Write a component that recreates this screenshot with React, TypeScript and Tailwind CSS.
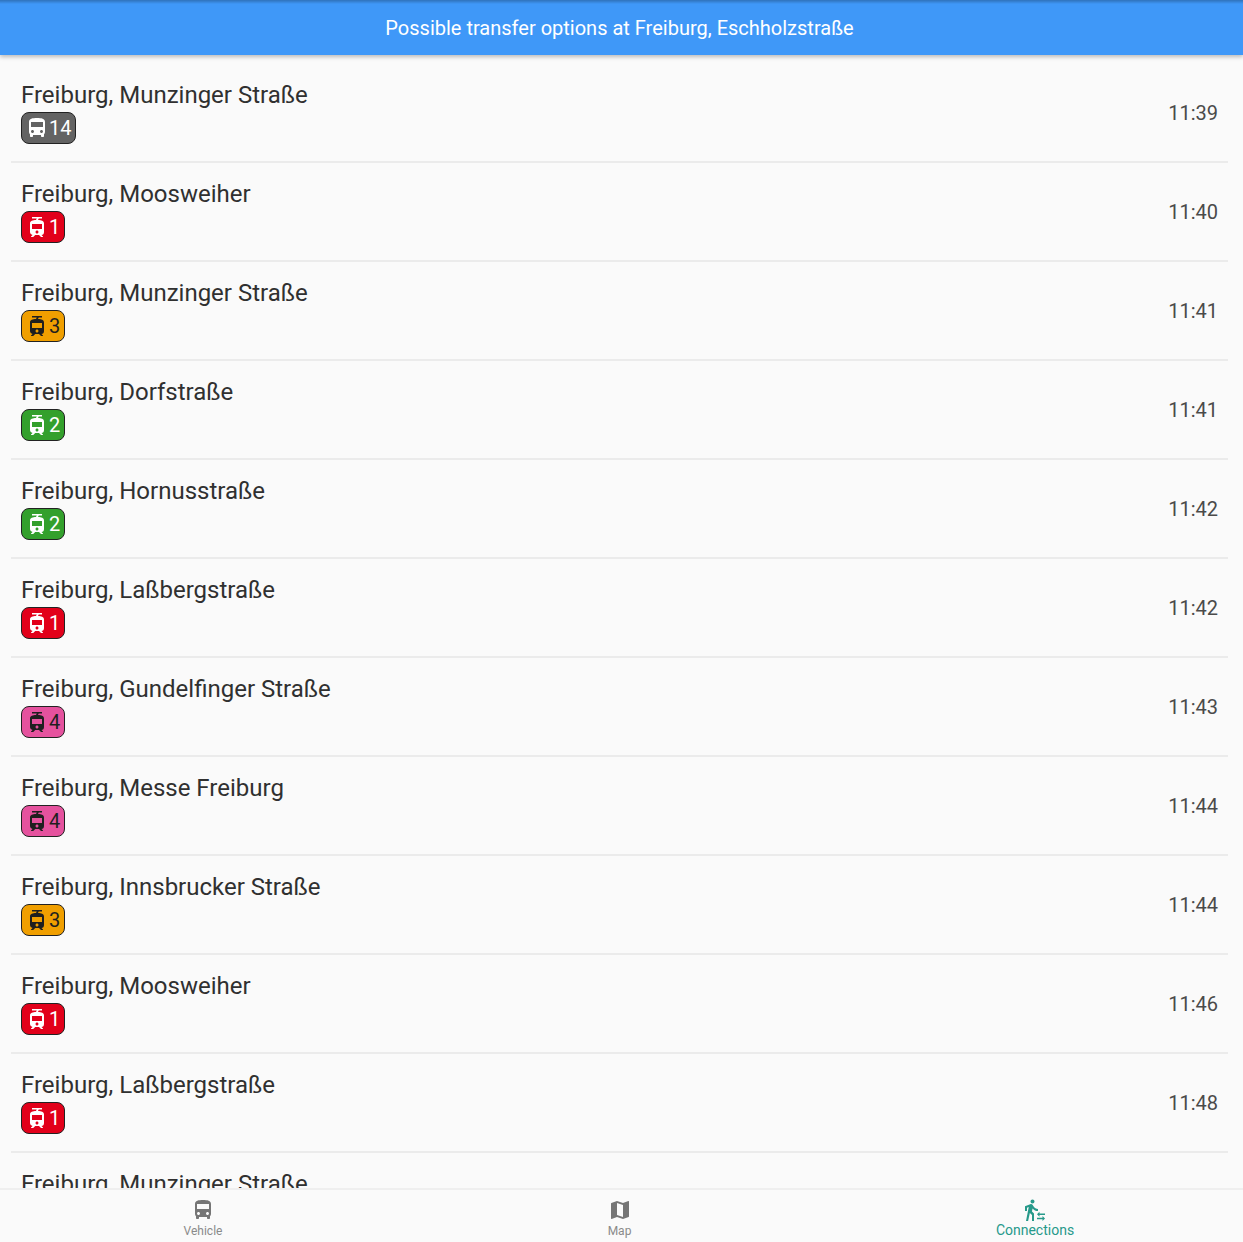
import { MdDirectionsBus, MdMap, MdTram, MdTransferWithinAStation } from 'react-icons/md';

type Mode = 'bus' | 'tram';

interface Connection {
  stop: string;
  line: string;
  mode: Mode;
  badge: string;
  time: string;
}

const BADGE_RED = 'bg-[#e2001a] text-white';
const BADGE_ORANGE = 'bg-[#f09f00] text-[#1f1f1f]';
const BADGE_GREEN = 'bg-[#33a02c] text-white';
const BADGE_PINK = 'bg-[#e5529e] text-[#1f1f1f]';
const BADGE_GREY = 'bg-[#636363] text-white';

const CONNECTIONS: Connection[] = [
  { stop: 'Freiburg, Munzinger Straße', line: '14', mode: 'bus', badge: BADGE_GREY, time: '11:39' },
  { stop: 'Freiburg, Moosweiher', line: '1', mode: 'tram', badge: BADGE_RED, time: '11:40' },
  { stop: 'Freiburg, Munzinger Straße', line: '3', mode: 'tram', badge: BADGE_ORANGE, time: '11:41' },
  { stop: 'Freiburg, Dorfstraße', line: '2', mode: 'tram', badge: BADGE_GREEN, time: '11:41' },
  { stop: 'Freiburg, Hornusstraße', line: '2', mode: 'tram', badge: BADGE_GREEN, time: '11:42' },
  { stop: 'Freiburg, Laßbergstraße', line: '1', mode: 'tram', badge: BADGE_RED, time: '11:42' },
  { stop: 'Freiburg, Gundelfinger Straße', line: '4', mode: 'tram', badge: BADGE_PINK, time: '11:43' },
  { stop: 'Freiburg, Messe Freiburg', line: '4', mode: 'tram', badge: BADGE_PINK, time: '11:44' },
  { stop: 'Freiburg, Innsbrucker Straße', line: '3', mode: 'tram', badge: BADGE_ORANGE, time: '11:44' },
  { stop: 'Freiburg, Moosweiher', line: '1', mode: 'tram', badge: BADGE_RED, time: '11:46' },
  { stop: 'Freiburg, Laßbergstraße', line: '1', mode: 'tram', badge: BADGE_RED, time: '11:48' },
  { stop: 'Freiburg, Munzinger Straße', line: '14', mode: 'bus', badge: BADGE_GREY, time: '11:49' },
];

function LineBadge({ c }: { c: Connection }) {
  const Icon = c.mode === 'bus' ? MdDirectionsBus : MdTram;
  return (
    <div
      className={`mt-[1px] flex h-[32px] w-fit items-center rounded-[8px] border border-[#222] pl-[3px] pr-[4px] ${c.badge}`}
    >
      <Icon size={24} />
      <span className="text-[20px] leading-none">{c.line}</span>
    </div>
  );
}

function ConnectionRow({ c }: { c: Connection }) {
  return (
    <div className="mx-[11px] flex h-[99px] shrink-0 items-center justify-between border-b-2 border-[#ebebeb] px-[10px]">
      <div className="mb-[2px]">
        <div className="text-[24px] leading-[32px] text-[#303030]">{c.stop}</div>
        <LineBadge c={c} />
      </div>
      <div className="text-[20px] text-[#4a4a4a]">{c.time}</div>
    </div>
  );
}

function NavItem({
  icon,
  label,
  active,
}: {
  icon: React.ReactNode;
  label: string;
  active?: boolean;
}) {
  return (
    <div className={`flex flex-col items-center pt-[8px] ${active ? 'text-[#26998a]' : 'text-[#757575]'}`}>
      {icon}
      <span className={active ? 'text-[14px] leading-[16px]' : 'mt-[1px] text-[12px] leading-[16px] text-[#8a8a8a]'}>
        {label}
      </span>
    </div>
  );
}

export default function App() {
  return (
    <div className="flex h-[1242px] flex-col overflow-hidden bg-[#fafafa] font-['Roboto',sans-serif]">
      <header className="relative z-10 flex h-[55px] shrink-0 items-center justify-center bg-[#3f98f8] pr-[4px] text-[20px] text-white shadow-[0_2px_4px_rgba(0,0,0,0.25)]">
        <div className="absolute inset-x-0 top-0 h-[4px] bg-gradient-to-b from-black/25 to-transparent" />
        Possible transfer options at Freiburg, Eschholzstraße
      </header>
      <main className="flex min-h-0 flex-1 flex-col overflow-hidden pt-[9px] pr-[4px]">
        {CONNECTIONS.map((c, i) => (
          <ConnectionRow key={i} c={c} />
        ))}
      </main>
      <nav className="grid h-[54px] shrink-0 grid-cols-[406px_427px_1fr] border-t-2 border-[#efefef] bg-[#fafafa] pr-[6px]">
        <NavItem icon={<MdDirectionsBus size={24} />} label="Vehicle" />
        <NavItem icon={<MdMap size={24} />} label="Map" />
        <NavItem icon={<MdTransferWithinAStation size={24} />} label="Connections" active />
      </nav>
    </div>
  );
}
